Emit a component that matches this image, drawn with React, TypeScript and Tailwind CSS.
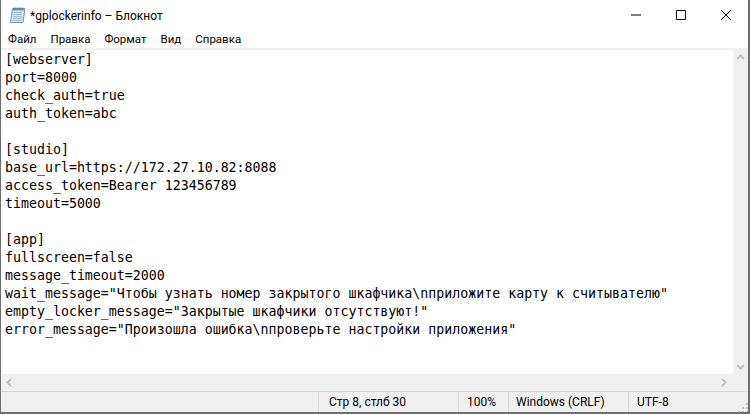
const lines = [
  "[webserver]",
  "port=8000",
  "check_auth=true",
  "auth_token=abc",
  "",
  "[studio]",
  "base_url=https://172.27.10.82:8088",
  "access_token=Bearer 123456789",
  "timeout=5000",
  "",
  "[app]",
  "fullscreen=false",
  "message_timeout=2000",
  'wait_message="Чтобы узнать номер закрытого шкафчика\\nприложите карту к считывателю"',
  'empty_locker_message="Закрытые шкафчики отсутствуют!"',
  'error_message="Произошла ошибка\\nпроверьте настройки приложения"',
];

const menu = ["Файл", "Правка", "Формат", "Вид", "Справка"];

const NotepadIcon = () => (
  <svg width="17" height="17" viewBox="0 0 17 17" className="shrink-0">
    <path d="M3.500 1.500h12.500L14 15.500H1.500z" fill="#d4e6f3" stroke="#7d929f" strokeWidth="1" />
    <path d="M5 5.500h8.500M4.600 7.500h8.500M4.300 9.500h8.500M4 11.500h8.500M3.700 13.500h8.500" stroke="#a9bfcd" strokeWidth="1" />
    <path d="M3.800 2h11.800l-.4 1.500H3.600z" fill="#6aa9cf" />
    <path d="M5 .5v2M7 .5v2M9 .5v2M11 .5v2M13 .5v2" stroke="#5a6b76" strokeWidth="1" />
  </svg>
);

const Arrow = ({ d }: { d: string }) => (
  <svg width="9" height="9" viewBox="0 0 9 9">
    <path d={d} fill="none" stroke="#c2c2c2" strokeWidth="2" />
  </svg>
);

export default function App() {
  return (
    <div className="flex h-[414px] w-[750px] flex-col overflow-hidden border-b-2 border-l border-r-2 border-[#6e6e6e] bg-white font-['Roboto',sans-serif] text-black">
      {/* title bar */}
      <div className="flex h-[31px] shrink-0 items-center pl-[8px]">
        <NotepadIcon />
        <span className="ml-[4px] text-[12px]">*gplockerinfo – Блокнот</span>
        <div className="ml-auto flex h-full">
          <button className="flex w-[45px] items-center justify-center pb-[2px]">
            <svg width="10" height="10" viewBox="0 0 10 10"><path d="M0 5h10" stroke="#000" /></svg>
          </button>
          <button className="flex w-[45px] items-center justify-center pb-[2px]">
            <svg width="10" height="10" viewBox="0 0 10 10"><path d="M.5.5h9v9h-9z" fill="none" stroke="#000" /></svg>
          </button>
          <button className="flex w-[45px] items-center justify-center pb-[2px]">
            <svg width="10" height="10" viewBox="0 0 10 10"><path d="M0 0l10 10M10 0L0 10" stroke="#000" /></svg>
          </button>
        </div>
      </div>

      {/* menu */}
      <div className="flex h-[19px] shrink-0 items-center gap-[14px] border-b-2 border-[#f0f0f0] pl-[7px] text-[11.5px]">
        {menu.map((m) => (
          <span key={m}>{m}</span>
        ))}
      </div>

      {/* editor */}
      <div className="flex min-h-0 flex-1">
        <pre className="min-w-0 flex-1 overflow-hidden pl-[4px] pt-[1px] font-['DejaVu_Sans_Mono',monospace] text-[13.28px] leading-[18px]">
          {lines.map((l, i) => (
            <div key={i} className="h-[18px]">{l}</div>
          ))}
        </pre>
        <div className="flex w-[15px] shrink-0 flex-col items-center justify-between bg-[#f0f0f0] py-[3px]">
          <Arrow d="M1 6l3.500-3.500L8 6" />
          <Arrow d="M1 3l3.500 3.500L8 3" />
        </div>
      </div>

      {/* horizontal scrollbar */}
      <div className="flex h-[18px] shrink-0 items-center justify-between border-b border-[#d7d7d7] bg-[#f0f0f0] pl-[4px] pr-[20px]">
        <Arrow d="M6 1L2.500 4.500 6 8" />
        <Arrow d="M3 1l3.500 3.500L3 8" />
      </div>

      {/* status bar */}
      <div className="relative flex h-[20px] shrink-0 items-center bg-[#f0f0f0] text-[12px]">
        <div className="flex-1" />
        <div className="flex h-full w-[140px] items-center border-l border-[#d7d7d7] pl-[10px]">Стр 8, стлб 30</div>
        <div className="flex h-full w-[50px] items-center border-l border-[#d7d7d7] pl-[8px]">100%</div>
        <div className="flex h-full w-[120px] items-center border-l border-[#d7d7d7] pl-[7px]">Windows (CRLF)</div>
        <div className="flex h-full w-[120px] items-center border-l border-[#d7d7d7] pl-[8px]">UTF-8</div>
        <svg width="10" height="10" viewBox="0 0 10 10" className="absolute bottom-0 right-0">
          <path d="M8 1h2v2H8zM4 5h2v2H4zM8 5h2v2H8zM0 9h2v1H0zM4 9h2v1H4zM8 9h2v1H8z" fill="#bdbdbd" />
        </svg>
      </div>
    </div>
  );
}
